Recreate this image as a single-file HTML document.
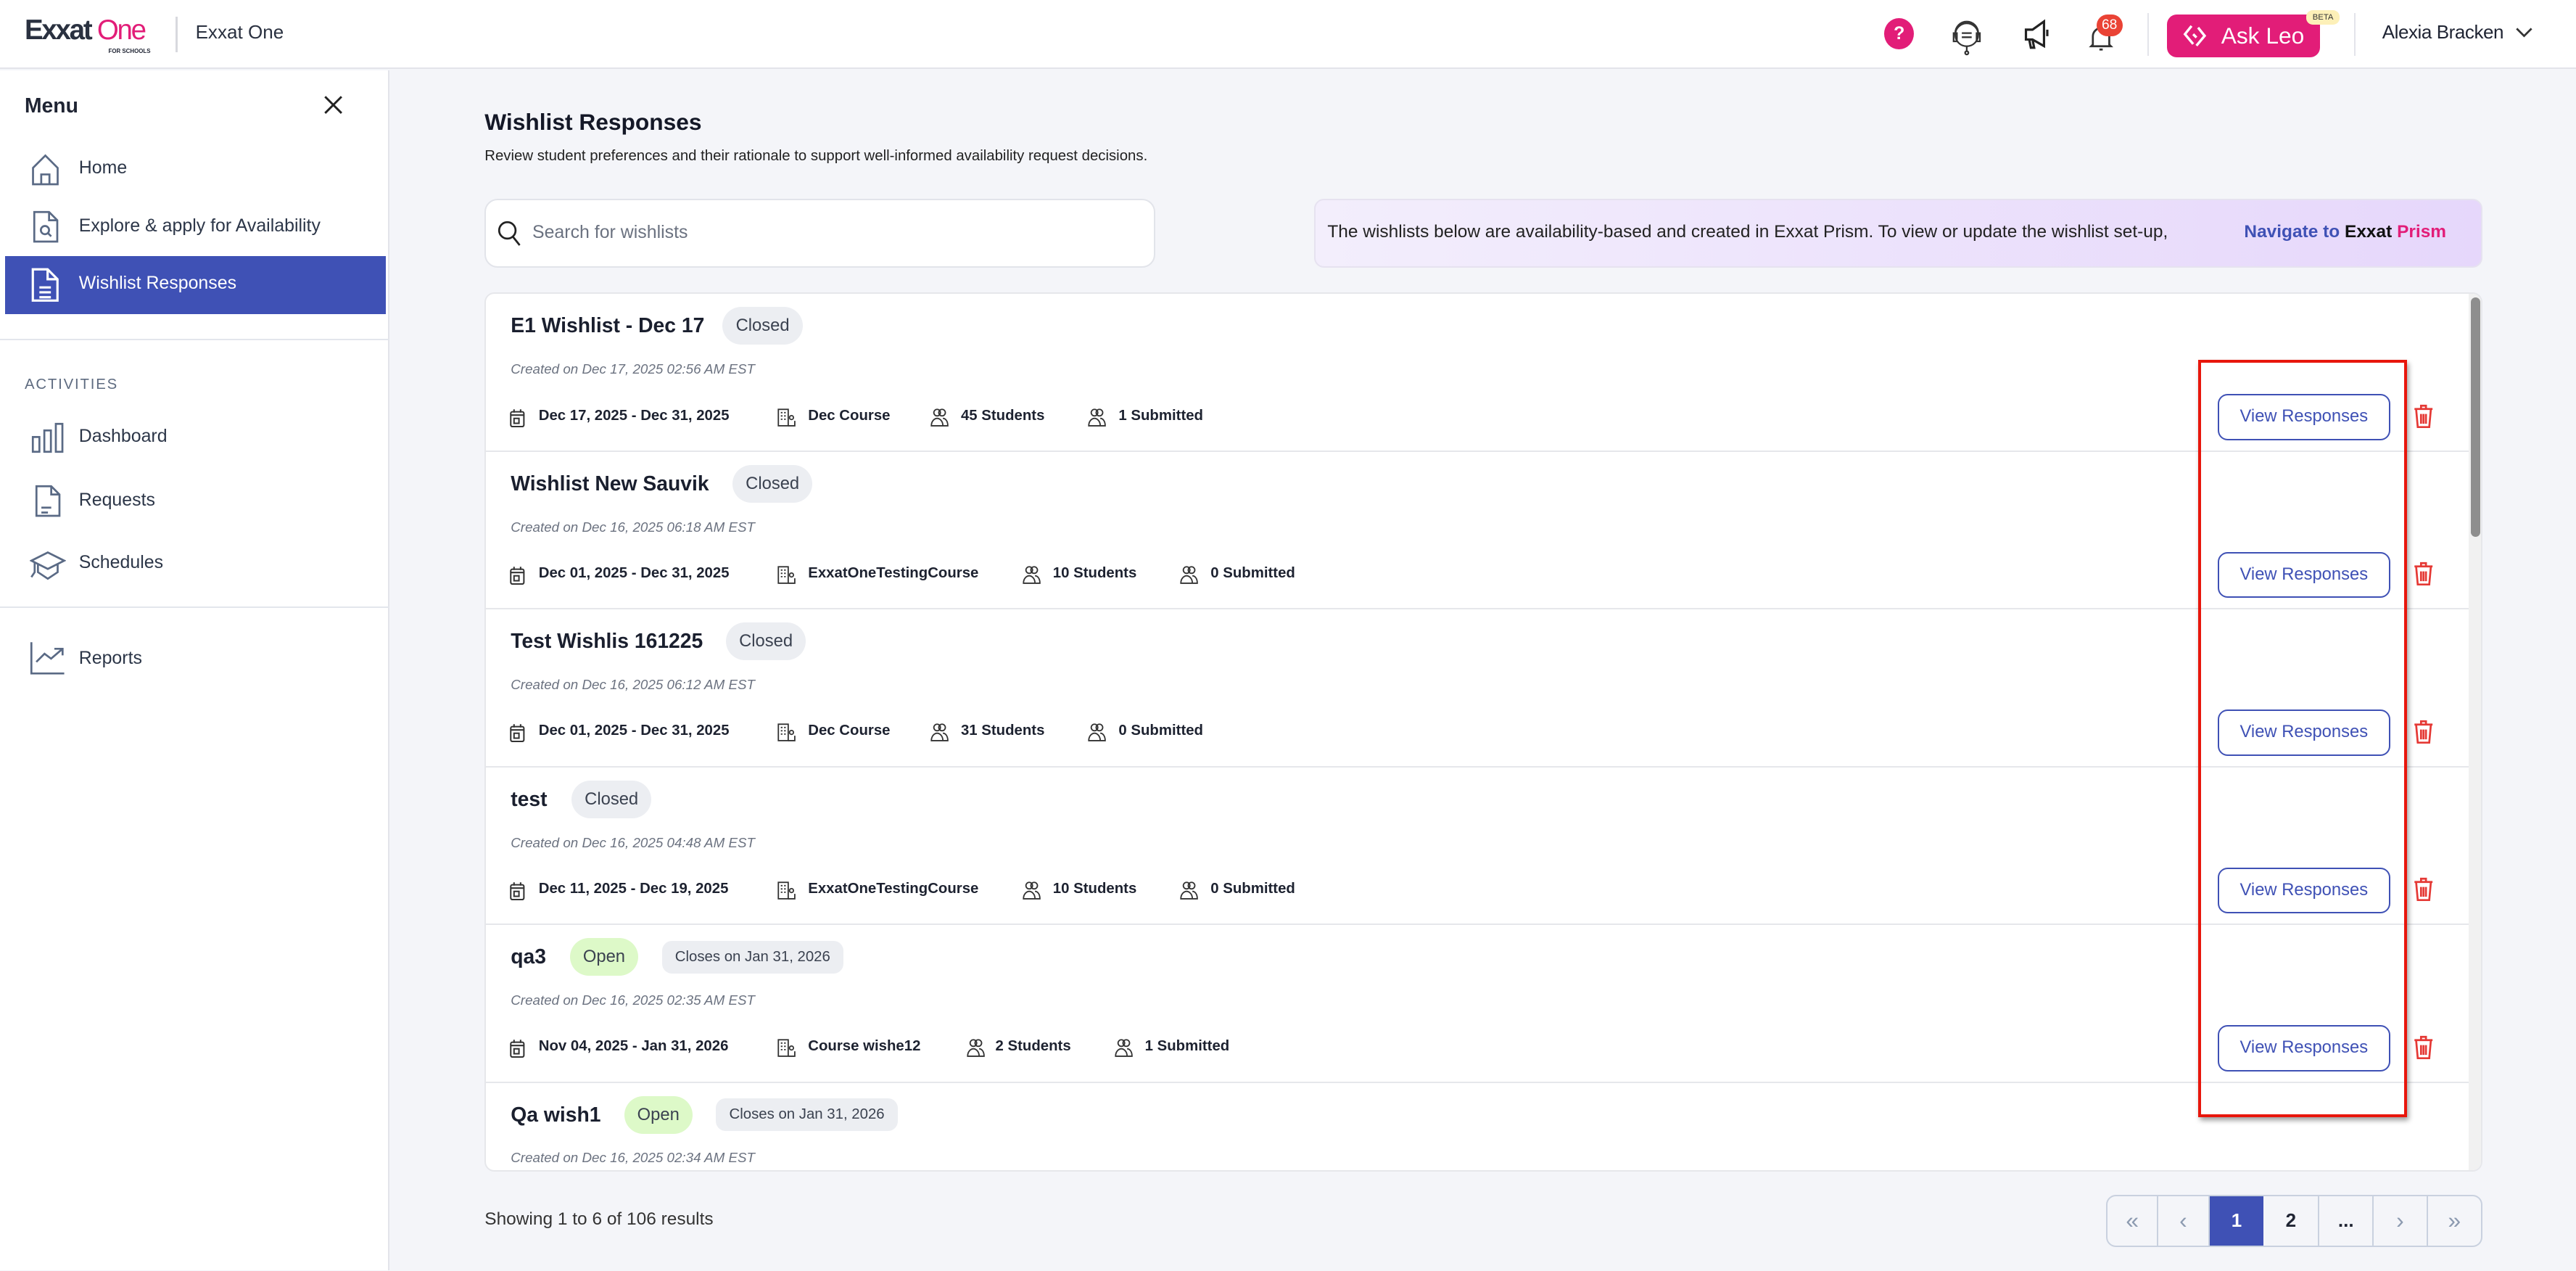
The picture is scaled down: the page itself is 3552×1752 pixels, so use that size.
<!DOCTYPE html>
<html><head><meta charset="utf-8">
<style>
*{box-sizing:border-box;margin:0;padding:0}
html,body{width:3552px;height:1752px;overflow:hidden;background:#f4f5f9}
#z{zoom:2.26531;width:1568px;height:773px;position:relative;font-family:"Liberation Sans",sans-serif;color:#1f2433;background:#f4f5f9}
.a{position:absolute;white-space:nowrap}
.hdr{left:0;top:0;width:1568px;height:42px;background:#fff;border-bottom:1px solid #e3e4ea}
.side{left:0;top:43px;width:237px;height:730px;background:#fff;border-right:1px solid #e3e4ea}
.nav{font-size:11px;color:#2c3648}
.row{position:absolute;left:0;width:1207px;height:96px;border-bottom:1px solid #e6e7eb}
.t{position:absolute;left:15px;top:12px;font-size:12.5px;font-weight:bold;color:#1a1f2e}
.pill{position:absolute;top:8px;height:23px;border-radius:12px;background:#eceef2;font-size:10.5px;line-height:23px;padding:0 8px;color:#3b4250}
.open{background:#ddf9c8}
.cl{border-radius:6px;height:20px;top:9.5px;line-height:20px;font-size:9px}
.cr{position:absolute;left:15px;top:41px;font-size:8.3px;font-style:italic;color:#6b7280}
.m{position:absolute;top:69px;font-size:9px;font-weight:bold;color:#1d2230}
.mi{position:absolute;top:69px}
.btn{position:absolute;left:1054px;top:61px;width:105px;height:28px;border:1px solid #3f51b5;border-radius:6px;color:#3f51b5;font-size:10.5px;text-align:center;line-height:26px;background:#fff}
.tr{position:absolute;left:1173px;top:67px}
</style></head><body><div id="z">
<svg width="0" height="0" style="position:absolute"><defs>
<symbol id="cal" viewBox="0 0 10 12"><g fill="none" stroke="#333" stroke-width=".9"><rect x="1" y="2.5" width="8" height="9" rx="1"/><path d="M3 1v2M7 1v2M1 4.5h8"/><rect x="3" y="6.5" width="3" height="3"/></g></symbol>
<symbol id="bld" viewBox="0 0 12 12"><g fill="none" stroke="#333" stroke-width=".8"><rect x="1" y="1" width="6" height="10"/><path d="M2.5 3h1M4.5 3h1M2.5 5h1M4.5 5h1M2.5 7h1M4.5 7h1M7 11h4V8"/><circle cx="9" cy="6" r="1.2"/></g></symbol>
<symbol id="ppl" viewBox="0 0 12 12"><g fill="none" stroke="#333" stroke-width=".8"><circle cx="4.5" cy="3" r="2"/><circle cx="7.5" cy="3" r="2"/><path d="M1 11c0-3 2-4.5 3.5-4.5S8 8 8 11zM8 6.5c1.5 0 3 1.5 3 4.5H8"/></g></symbol>
<symbol id="tr" viewBox="0 0 13 15"><g fill="none" stroke="#e53935" stroke-width="1.2"><path d="M1 3h11M5 3V1h3v2M2 3l1 11h7l1-11M5 6v6M6.5 6v6M8 6v6"/></g></symbol>
</defs></svg>
<div class="a hdr"></div>
<div class="a" style="left:15px;top:9px;font-size:17px;font-weight:bold;letter-spacing:-1px;color:#2a3140">Exxat <span style="color:#e21d78;font-weight:normal">One</span></div>
<div class="a" style="left:66px;top:29px;font-size:3.5px;font-weight:bold">FOR SCHOOLS</div>
<div class="a" style="left:107px;top:10px;width:1px;height:22px;background:#d8d9de"></div>
<div class="a" style="left:119px;top:13px;font-size:11.5px;color:#2a3140">Exxat One</div>
<div class="a" style="left:1147px;top:11px;width:18px;height:19px;border-radius:50%;background:#e21d78;color:#fff;font-size:11px;font-weight:bold;text-align:center;line-height:19px">?</div>
<svg class="a" style="left:1186px;top:10px" width="22" height="24" viewBox="0 0 22 24" fill="none" stroke="#333" stroke-width="1"><circle cx="11" cy="11" r="7"/><path d="M4 11v-1a7 7 0 0114 0v1M3 10h2v5H3zM17 10h2v5h-2zM8 10h6M8 12.5h6M11 18v3"/><circle cx="11" cy="22" r="1"/></svg>
<svg class="a" style="left:1231px;top:11px" width="18" height="20" viewBox="0 0 18 20" fill="none" stroke="#222" stroke-width="1.4"><path d="M2 7h4l7-5v15l-7-4H2zM4 13l1 5h2l-1-5M15 7v4"/></svg>
<svg class="a" style="left:1271px;top:14px" width="16" height="18" viewBox="0 0 16 18" fill="none" stroke="#333" stroke-width="1.2"><path d="M3 13V8a5 5 0 0110 0v5l1 1H2zM7 16h2"/></svg>
<div class="a" style="left:1276px;top:9px;width:16px;height:13px;border-radius:7px;background:#ea4335;color:#fff;font-size:8.5px;text-align:center;line-height:13px">68</div>
<div class="a" style="left:1307px;top:8px;width:1px;height:26px;background:#e3e4ea"></div>
<div class="a" style="left:1319px;top:9px;width:93px;height:26px;border-radius:6px;background:#e21d78;color:#fff;font-size:14px;line-height:26px;padding-left:33px">Ask Leo</div>
<svg class="a" style="left:1327px;top:13px" width="18" height="18" viewBox="0 0 18 18" fill="none" stroke="#fff" stroke-width="1.5"><path d="M7 3l-4 5 5 6M11 4l4 5-5 6M8 8l2 2"/></svg>
<div class="a" style="left:1404px;top:6px;width:20px;height:9px;border-radius:4px;background:#fdf0b8;font-size:5px;line-height:9px;text-align:center;color:#333">BETA</div>
<div class="a" style="left:1433px;top:8px;width:1px;height:26px;background:#e3e4ea"></div>
<div class="a" style="left:1450px;top:13px;font-size:11.5px;color:#1f2433;letter-spacing:-.2px">Alexia Bracken</div>
<svg class="a" style="left:1531px;top:16px" width="11" height="8" viewBox="0 0 11 8" fill="none" stroke="#333" stroke-width="1.2"><path d="M1 1.5l4.5 4.5 4.5-4.5"/></svg>

<div class="a side"></div>
<div class="a" style="left:15px;top:57px;font-size:12.5px;font-weight:bold;color:#1f2433">Menu</div>
<svg class="a" style="left:197px;top:58px" width="12" height="12" viewBox="0 0 12 12" stroke="#222" stroke-width="1.3"><path d="M1 1l10 10M11 1L1 11"/></svg>
<svg class="a" style="left:18px;top:93px" width="19" height="20" viewBox="0 0 19 20" fill="none" stroke="#5a6a85" stroke-width="1.2"><path d="M2 9l7.5-7.5L17 9v10H2zM7 19v-6h5v6"/></svg>
<div class="a nav" style="left:48px;top:96px">Home</div>
<svg class="a" style="left:20px;top:128px" width="16" height="20" viewBox="0 0 16 20" fill="none" stroke="#5a6a85" stroke-width="1.2"><path d="M1 1h9l5 5v13H1zM10 1v5h5"/><circle cx="7.5" cy="12" r="2.5"/><path d="M9.3 13.8l2 2"/></svg>
<div class="a nav" style="left:48px;top:131px">Explore &amp; apply for Availability</div>
<div class="a" style="left:3px;top:156px;width:232px;height:35px;background:#3f51b5"></div>
<svg class="a" style="left:19px;top:163px" width="17" height="21" viewBox="0 0 17 21" fill="none" stroke="#fff" stroke-width="1.4"><path d="M1 1h9l6 6v13H1zM10 1v6h6M5 12h7M5 15h7M5 18h7"/></svg>
<div class="a nav" style="left:48px;top:166px;color:#fff">Wishlist Responses</div>
<div class="a" style="left:0;top:206px;width:237px;height:1px;background:#e3e6ec"></div>
<div class="a" style="left:15px;top:229px;font-size:9px;letter-spacing:0.8px;color:#5e6b80">ACTIVITIES</div>
<svg class="a" style="left:19px;top:257px" width="20" height="19" viewBox="0 0 20 19" fill="none" stroke="#5a6a85" stroke-width="1.2"><rect x="1" y="9" width="4" height="9"/><rect x="8" y="5" width="4" height="13"/><rect x="15" y="1" width="4" height="17"/></svg>
<div class="a nav" style="left:48px;top:259px">Dashboard</div>
<svg class="a" style="left:21px;top:295px" width="16" height="20" viewBox="0 0 16 20" fill="none" stroke="#5a6a85" stroke-width="1.2"><path d="M1 1h9l5 5v13H1zM10 1v5h5M4 14h6M4 17h4"/></svg>
<div class="a nav" style="left:48px;top:298px">Requests</div>
<svg class="a" style="left:18px;top:334px" width="22" height="19" viewBox="0 0 22 19" fill="none" stroke="#5a6a85" stroke-width="1.2"><path d="M1 7l10-5 10 5-10 5zM5 9v5l6 4 6-4V9M3 8v6l-2 3"/></svg>
<div class="a nav" style="left:48px;top:336px">Schedules</div>
<div class="a" style="left:0;top:369px;width:237px;height:1px;background:#e3e6ec"></div>
<svg class="a" style="left:18px;top:390px" width="22" height="21" viewBox="0 0 22 21" fill="none" stroke="#5a6a85" stroke-width="1.2"><path d="M1 1v19h20M4 13l5-5 4 3 7-6M15 5h5v4"/></svg>
<div class="a nav" style="left:48px;top:394px">Reports</div>

<div class="a" style="left:295px;top:66px;font-size:14px;font-weight:bold;color:#141827">Wishlist Responses</div>
<div class="a" style="left:295px;top:90px;font-size:9px;color:#222">Review student preferences and their rationale to support well-informed availability request decisions.</div>
<div class="a" style="left:295px;top:121px;width:408px;height:42px;background:#fff;border:1px solid #e2e4ea;border-radius:8px"></div>
<svg class="a" style="left:303px;top:134px" width="15" height="16" viewBox="0 0 15 16" fill="none" stroke="#222" stroke-width="1.2"><circle cx="6" cy="6" r="5"/><path d="M9.5 10l4 5"/></svg>
<div class="a" style="left:324px;top:135px;font-size:11px;color:#6b7280">Search for wishlists</div>
<div class="a" style="left:800px;top:121px;width:711px;height:42px;border-radius:6px;background:linear-gradient(90deg,#f3eefc,#e6d7fb);border:1px solid #e6e2f0"></div>
<div class="a" style="left:808px;top:135px;font-size:10.8px;color:#222">The wishlists below are availability-based and created in Exxat Prism. To view or update the wishlist set-up,</div>
<div class="a" style="left:1366px;top:135px;font-size:10.8px;font-weight:bold;color:#3f51b5">Navigate to <span style="color:#111">Exxat</span> <span style="color:#e21d78">Prism</span></div>

<div class="a" style="left:295px;top:178px;width:1216px;height:535px;background:#fff;border:1px solid #e6e7eb;border-radius:6px;overflow:hidden">
<div class="a" style="left:1207px;top:0;width:9px;height:535px;background:#f1f1f1"></div>
<div class="a" style="left:1208px;top:2px;width:6px;height:146px;border-radius:3px;background:#8e8e8e"></div>

<div class="row" style="top:0">
<div class="t">E1 Wishlist - Dec 17</div><div class="pill" style="left:144px">Closed</div>
<div class="cr">Created on Dec 17, 2025 02:56 AM EST</div>
<svg class="mi" style="left:14px" width="10" height="12"><use href="#cal"/></svg>
<div class="m" style="left:32px">Dec 17, 2025 - Dec 31, 2025</div>
<svg class="mi" style="left:177px" width="12" height="12"><use href="#bld"/></svg><div class="m" style="left:196px">Dec Course</div>
<svg class="mi" style="left:270px" width="12" height="12"><use href="#ppl"/></svg><div class="m" style="left:289px">45 Students</div>
<svg class="mi" style="left:366px" width="12" height="12"><use href="#ppl"/></svg><div class="m" style="left:385px">1 Submitted</div>
<div class="btn">View Responses</div>
<svg class="tr" width="13" height="15"><use href="#tr"/></svg>
</div>
<div class="row" style="top:96px">
<div class="t">Wishlist New Sauvik</div><div class="pill" style="left:150px">Closed</div>
<div class="cr">Created on Dec 16, 2025 06:18 AM EST</div>
<svg class="mi" style="left:14px" width="10" height="12"><use href="#cal"/></svg>
<div class="m" style="left:32px">Dec 01, 2025 - Dec 31, 2025</div>
<svg class="mi" style="left:177px" width="12" height="12"><use href="#bld"/></svg><div class="m" style="left:196px">ExxatOneTestingCourse</div>
<svg class="mi" style="left:326px" width="12" height="12"><use href="#ppl"/></svg><div class="m" style="left:345px">10 Students</div>
<svg class="mi" style="left:422px" width="12" height="12"><use href="#ppl"/></svg><div class="m" style="left:441px">0 Submitted</div>
<div class="btn">View Responses</div>
<svg class="tr" width="13" height="15"><use href="#tr"/></svg>
</div>
<div class="row" style="top:192px">
<div class="t">Test Wishlis 161225</div><div class="pill" style="left:146px">Closed</div>
<div class="cr">Created on Dec 16, 2025 06:12 AM EST</div>
<svg class="mi" style="left:14px" width="10" height="12"><use href="#cal"/></svg>
<div class="m" style="left:32px">Dec 01, 2025 - Dec 31, 2025</div>
<svg class="mi" style="left:177px" width="12" height="12"><use href="#bld"/></svg><div class="m" style="left:196px">Dec Course</div>
<svg class="mi" style="left:270px" width="12" height="12"><use href="#ppl"/></svg><div class="m" style="left:289px">31 Students</div>
<svg class="mi" style="left:366px" width="12" height="12"><use href="#ppl"/></svg><div class="m" style="left:385px">0 Submitted</div>
<div class="btn">View Responses</div>
<svg class="tr" width="13" height="15"><use href="#tr"/></svg>
</div>
<div class="row" style="top:288px">
<div class="t">test</div><div class="pill" style="left:52px">Closed</div>
<div class="cr">Created on Dec 16, 2025 04:48 AM EST</div>
<svg class="mi" style="left:14px" width="10" height="12"><use href="#cal"/></svg>
<div class="m" style="left:32px">Dec 11, 2025 - Dec 19, 2025</div>
<svg class="mi" style="left:177px" width="12" height="12"><use href="#bld"/></svg><div class="m" style="left:196px">ExxatOneTestingCourse</div>
<svg class="mi" style="left:326px" width="12" height="12"><use href="#ppl"/></svg><div class="m" style="left:345px">10 Students</div>
<svg class="mi" style="left:422px" width="12" height="12"><use href="#ppl"/></svg><div class="m" style="left:441px">0 Submitted</div>
<div class="btn">View Responses</div>
<svg class="tr" width="13" height="15"><use href="#tr"/></svg>
</div>
<div class="row" style="top:384px">
<div class="t">qa3</div><div class="pill open" style="left:51px">Open</div><div class="pill cl" style="left:107px">Closes on Jan 31, 2026</div>
<div class="cr">Created on Dec 16, 2025 02:35 AM EST</div>
<svg class="mi" style="left:14px" width="10" height="12"><use href="#cal"/></svg>
<div class="m" style="left:32px">Nov 04, 2025 - Jan 31, 2026</div>
<svg class="mi" style="left:177px" width="12" height="12"><use href="#bld"/></svg><div class="m" style="left:196px">Course wishe12</div>
<svg class="mi" style="left:292px" width="12" height="12"><use href="#ppl"/></svg><div class="m" style="left:310px">2 Students</div>
<svg class="mi" style="left:382px" width="12" height="12"><use href="#ppl"/></svg><div class="m" style="left:401px">1 Submitted</div>
<div class="btn">View Responses</div>
<svg class="tr" width="13" height="15"><use href="#tr"/></svg>
</div>
<div class="row" style="top:480px;border:0">
<div class="t">Qa wish1</div><div class="pill open" style="left:84px">Open</div><div class="pill cl" style="left:140px">Closes on Jan 31, 2026</div>
<div class="cr">Created on Dec 16, 2025 02:34 AM EST</div>
</div>
</div>

<div class="a" style="left:1338px;top:219px;width:127px;height:461px;border:2px solid #e8160c;box-shadow:1px 2px 3px rgba(0,0,0,.4)"></div>

<div class="a" style="left:295px;top:736px;font-size:10.8px;color:#333">Showing 1 to 6 of 106 results</div>
<div class="a" style="left:1282px;top:727px;width:229px;height:32px;border:1px solid #c9d1df;border-radius:6px;overflow:hidden;display:flex;font-size:11.5px;background:#f4f5f9">
<div style="width:31px;border-right:1px solid #c9d1df;text-align:center;line-height:30px;color:#8c9ab0;font-size:14px">«</div>
<div style="width:31px;border-right:1px solid #c9d1df;text-align:center;line-height:30px;color:#8c9ab0;font-size:14px">‹</div>
<div style="width:33px;background:#3f51b5;color:#fff;text-align:center;line-height:30px;font-weight:bold">1</div>
<div style="width:34px;border-right:1px solid #c9d1df;text-align:center;line-height:30px;font-weight:bold">2</div>
<div style="width:33px;border-right:1px solid #c9d1df;text-align:center;line-height:30px;font-weight:bold">...</div>
<div style="width:33px;border-right:1px solid #c9d1df;text-align:center;line-height:30px;color:#8c9ab0;font-size:14px">›</div>
<div style="flex:1;text-align:center;line-height:30px;color:#8c9ab0;font-size:14px">»</div>
</div>
</div></body></html>
